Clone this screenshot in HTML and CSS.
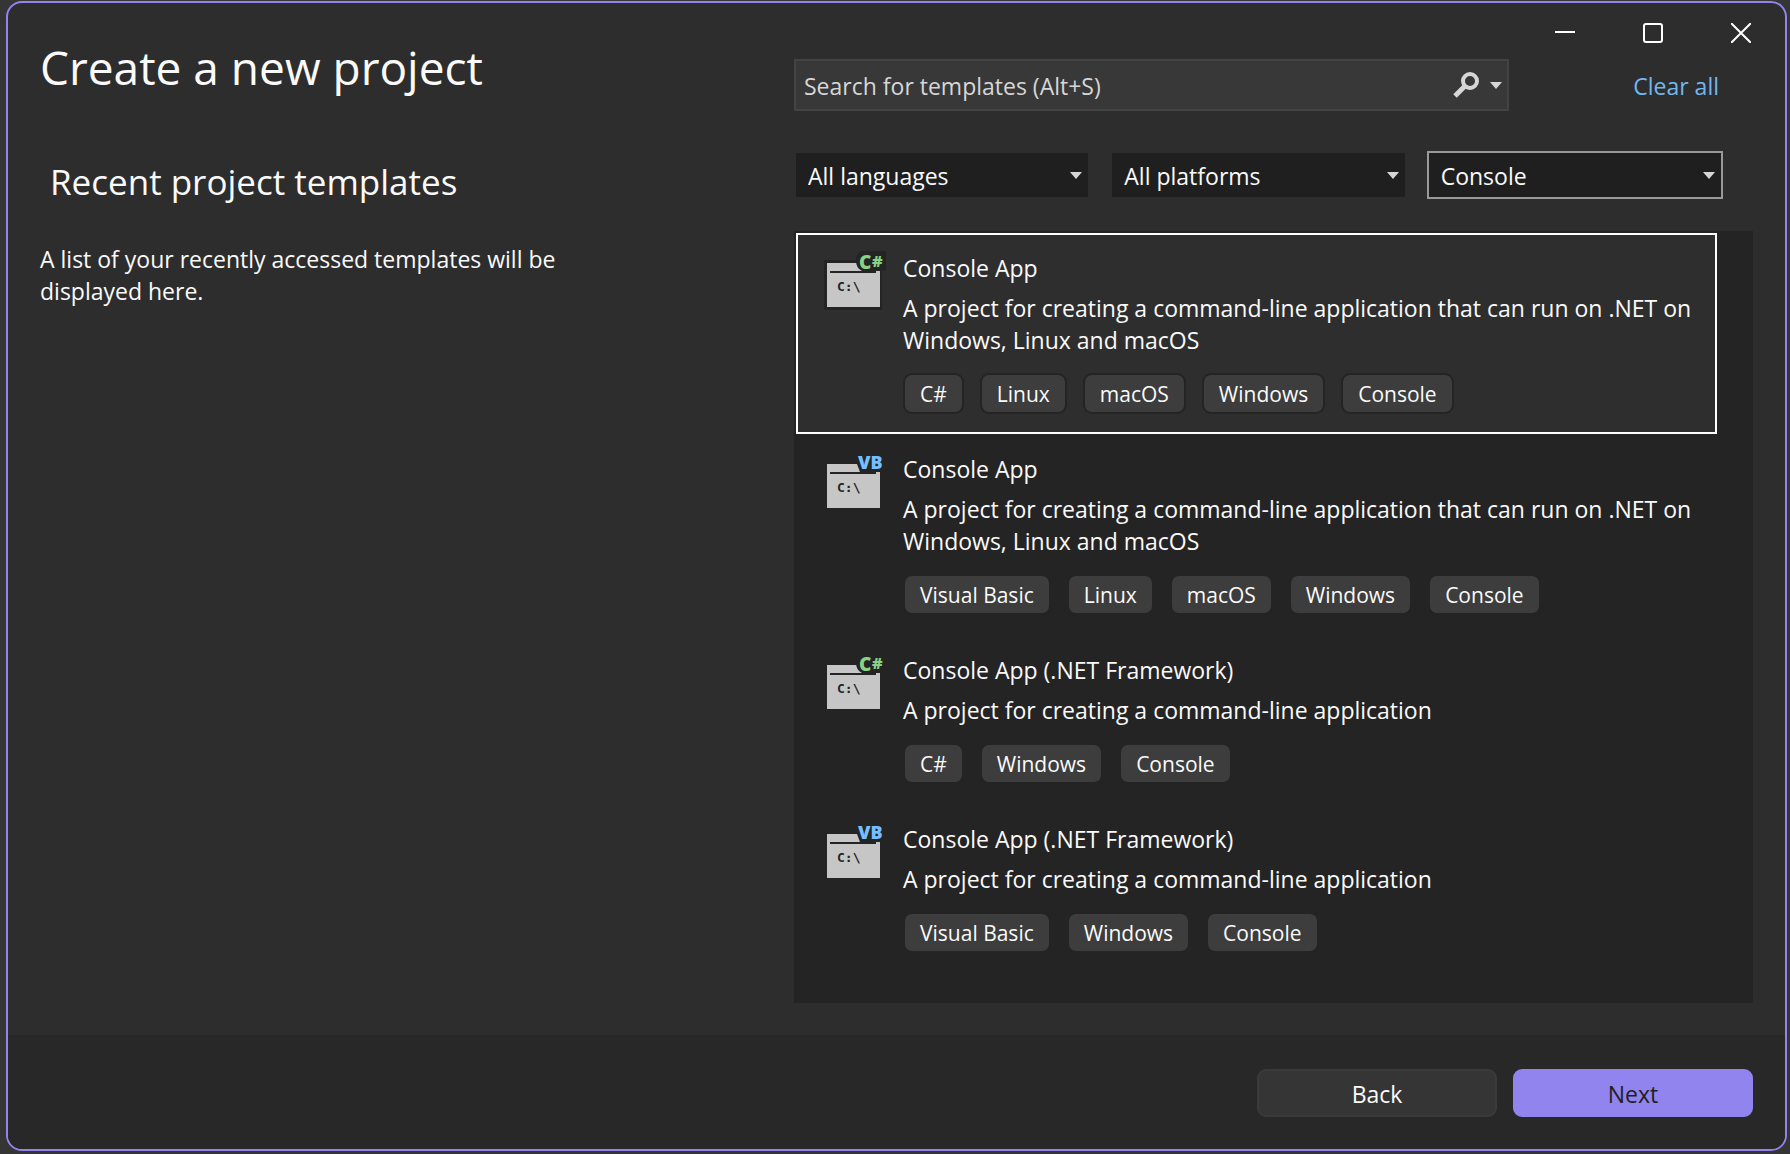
FILE: index.html
```html
<!DOCTYPE html>
<html lang="en">
<head>
  <meta charset="UTF-8">
  <meta name="viewport" content="width=device-width, initial-scale=1.0">
  <title>Create a new project</title>
  <link rel="stylesheet" href="styles.css">
</head>
<body>
  <!-- Shared icons -->
  <svg class="icon-defs" aria-hidden="true">
    <symbol id="arrow" viewBox="0 0 12 7">
      <path d="M0 0h12L6 7z" fill="#d6d6d6"/>
    </symbol>
    <symbol id="console-cs" viewBox="0 0 66 62">
      <path d="M2 10h58v50H2z" fill="#242424"/>
      <path d="M5 13h53v44H5z" fill="#c6c6c6"/>
      <path d="M40 1h24v20H40q-6-3-6-10 0-8 6-10z" fill="#242424"/>
      <path d="M54 21h4v2h-4z" fill="#c6c6c6"/>
      <path d="M8 21h46v2H8z" fill="#242424"/>
      <text class="prompt" x="15" y="41">C:\</text>
      <text class="badge-c" x="37" y="19">C</text>
      <text class="badge-sharp" x="50" y="17">#</text>
    </symbol>
    <symbol id="console-vb" viewBox="0 0 66 62">
      <path d="M2 10h58v50H2z" fill="#242424"/>
      <path d="M5 13h53v44H5z" fill="#c6c6c6"/>
      <path d="M35 13l3 8h20v-9H35z" fill="#242424"/>
      <path d="M54 21h4v2h-4z" fill="#c6c6c6"/>
      <path d="M8 21h46v2H8z" fill="#242424"/>
      <text class="prompt" x="15" y="41">C:\</text>
      <text class="badge-vb" x="36" y="18">VB</text>
    </symbol>
  </svg>

  <div class="window">
    <div class="main">
      <!-- Recent templates -->
      <div class="recent">
        <h1>Create a new project</h1>
        <h2>Recent project templates</h2>
        <p>A list of your recently accessed templates will be displayed here.</p>
      </div>

      <!-- Template picker -->
      <div class="picker">
        <div class="window-controls">
          <button type="button" aria-label="Minimize">
            <svg width="20" height="20" viewBox="0 0 20 20"><path d="M0 9h20" stroke="#fff" stroke-width="2"/></svg>
          </button>
          <button type="button" aria-label="Maximize">
            <svg width="20" height="20" viewBox="0 0 20 20"><rect x="1" y="1" width="18" height="18" rx="2" fill="none" stroke="#fff" stroke-width="2"/></svg>
          </button>
          <button type="button" aria-label="Close">
            <svg width="20" height="20" viewBox="0 0 20 20"><path d="M0 0l20 20M20 0L0 20" stroke="#fff" stroke-width="2"/></svg>
          </button>
        </div>

        <div class="search-row">
          <div class="search">
            <input type="text" placeholder="Search for templates (Alt+S)" aria-label="Search for templates">
            <button type="button" aria-label="Search">
              <svg width="26" height="26" viewBox="0 0 26 26" fill="none" stroke="#d6d6d6"><circle cx="17" cy="9" r="7" stroke-width="4"/><path d="M12 14L2 24" stroke-width="5"/></svg>
            </button>
            <button type="button" aria-label="Search options">
              <svg width="12" height="7"><use href="#arrow"/></svg>
            </button>
          </div>
          <a class="clear-all" href="#">Clear all</a>
        </div>

        <div class="filters">
          <div class="filter">
            <select aria-label="Language"><option>All languages</option></select>
            <svg width="12" height="7"><use href="#arrow"/></svg>
          </div>
          <div class="filter">
            <select aria-label="Platform"><option>All platforms</option></select>
            <svg width="12" height="7"><use href="#arrow"/></svg>
          </div>
          <div class="filter active">
            <select aria-label="Project type"><option>Console</option></select>
            <svg width="12" height="7"><use href="#arrow"/></svg>
          </div>
        </div>

        <ul class="templates">
          <li class="template selected">
            <svg class="template-icon"><use href="#console-cs"/></svg>
            <div class="template-info">
              <h3>Console App</h3>
              <p>A project for creating a command-line application that can run on .NET on Windows, Linux and macOS</p>
              <div class="tags">
                <span>C#</span>
                <span>Linux</span>
                <span>macOS</span>
                <span>Windows</span>
                <span>Console</span>
              </div>
            </div>
          </li>
          <li class="template">
            <svg class="template-icon"><use href="#console-vb"/></svg>
            <div class="template-info">
              <h3>Console App</h3>
              <p>A project for creating a command-line application that can run on .NET on Windows, Linux and macOS</p>
              <div class="tags">
                <span>Visual Basic</span>
                <span>Linux</span>
                <span>macOS</span>
                <span>Windows</span>
                <span>Console</span>
              </div>
            </div>
          </li>
          <li class="template">
            <svg class="template-icon"><use href="#console-cs"/></svg>
            <div class="template-info">
              <h3>Console App (.NET Framework)</h3>
              <p>A project for creating a command-line application</p>
              <div class="tags">
                <span>C#</span>
                <span>Windows</span>
                <span>Console</span>
              </div>
            </div>
          </li>
          <li class="template">
            <svg class="template-icon"><use href="#console-vb"/></svg>
            <div class="template-info">
              <h3>Console App (.NET Framework)</h3>
              <p>A project for creating a command-line application</p>
              <div class="tags">
                <span>Visual Basic</span>
                <span>Windows</span>
                <span>Console</span>
              </div>
            </div>
          </li>
        </ul>
      </div>
    </div>

    <div class="footer">
      <button type="button" class="btn">Back</button>
      <button type="button" class="btn primary">Next</button>
    </div>
  </div>
</body>
</html>
```

FILE: styles.css
```css
/* Global Styles */
* {
  box-sizing: border-box;
}
body {
  margin: 0;
  padding: 1px 3px 3px 6px;
  min-height: 100vh;
  display: flex;
  background: #353535;
  color: #fafafa;
  font-family: "Open Sans", "Noto Sans", sans-serif;
  font-size: 23px;
  line-height: 32px;
}
h1, h2, h3, p, ul {
  margin: 0;
  padding: 0;
  font-weight: normal;
}
button, input, select {
  font: inherit;
  color: inherit;
}
button {
  padding: 0;
  border: none;
  background: none;
  cursor: pointer;
}
svg {
  display: block;
}
.icon-defs {
  display: none;
}

/* Window */
.window {
  flex: 1;
  display: flex;
  flex-direction: column;
  border: 2px solid #9184ee;
  border-radius: 16px;
  background: #2d2d2d;
  overflow: hidden;
}
.main {
  flex: 1;
  display: grid;
  grid-template-columns: minmax(0, 786fr) minmax(0, 991fr);
}

/* Recent templates */
.recent {
  padding: 32px 220px 0 32px;
}
.recent h1 {
  font-size: 46px;
  line-height: 64px;
}
.recent h2 {
  margin: 59px 0 37px 10px;
  font-size: 35px;
  line-height: 48px;
}

/* Picker */
.picker {
  display: flex;
  flex-direction: column;
  padding-bottom: 32px;
}
.window-controls {
  display: flex;
  justify-content: flex-end;
  height: 56px;
}
.window-controls button {
  display: grid;
  place-items: center;
  width: 88px;
  padding-top: 4px;
}
.search-row {
  display: flex;
  align-items: center;
  margin-right: 62px;
}
.search {
  flex: 1;
  display: flex;
  align-items: center;
  gap: 11px;
  height: 52px;
  padding-right: 5px;
  border: 2px solid #434343;
  background: #383838;
}
.search input {
  flex: 1;
  min-width: 0;
  padding: 2px 8px 0;
  border: none;
  outline: none;
  background: none;
}
.search input::placeholder {
  color: #d6d6d6;
  opacity: 1;
}
.clear-all {
  width: 214px;
  padding: 2px 4px 0 0;
  color: #71b8f0;
  text-align: right;
  text-decoration: none;
}

/* Filters */
.filters {
  display: grid;
  grid-template-columns: repeat(3, 1fr);
  gap: 20px;
  margin: 40px 62px 32px 0;
}
.filter {
  position: relative;
  height: 48px;
  border: 2px solid transparent;
  background: #1f1f1f;
  background-clip: padding-box;
}
.filter.active {
  border-color: #999999;
}
.filter select {
  width: 100%;
  height: 100%;
  padding: 2px 12px 0;
  border: none;
  outline: none;
  background: none;
  appearance: none;
}
.filter svg {
  position: absolute;
  top: 19px;
  right: 6px;
  pointer-events: none;
}

/* Template list */
.templates {
  flex: 1;
  margin-right: 32px;
  padding: 2px 36px 2px 2px;
  background: #242424;
  list-style: none;
}
.template {
  display: flex;
  gap: 15px;
  padding: 15px 16px 18px 24px;
  border: 2px solid transparent;
}
.template.selected {
  border-color: #ffffff;
  background: #2e2e2e;
}
.template-icon {
  flex: none;
  width: 66px;
  height: 62px;
}
.template-info {
  padding-top: 2px;
}
.template h3 {
  margin-bottom: 8px;
  font-size: 23px;
}
.tags {
  display: flex;
  flex-wrap: wrap;
  gap: 16px;
  margin-top: 17px;
}
.tags span {
  height: 41px;
  padding: 0 15px;
  border: 2px solid #242424;
  border-radius: 9px;
  background: #3d3d3d;
  font-size: 21px;
  line-height: 39px;
}

/* Icon lettering */
.prompt {
  fill: #242424;
  font: bold 13px "DejaVu Sans Mono", monospace;
}
.badge-c {
  fill: #89d185;
  font: 800 19px "Open Sans", sans-serif;
}
.badge-sharp {
  fill: #89d185;
  font: 800 16px "Open Sans", sans-serif;
}
.badge-vb {
  fill: #75beff;
  font: 800 18px "Open Sans", sans-serif;
}

/* Footer */
.footer {
  display: flex;
  justify-content: flex-end;
  gap: 16px;
  padding: 34px 32px 32px;
  background: #282828;
}
.btn {
  width: 240px;
  height: 48px;
  padding-top: 2px;
  border: 2px solid #3a3a3a;
  border-radius: 9px;
  background: #353535;
}
.btn.primary {
  border-color: #9184ee;
  background: #9184ee;
  color: #1f1f1f;
}
```
